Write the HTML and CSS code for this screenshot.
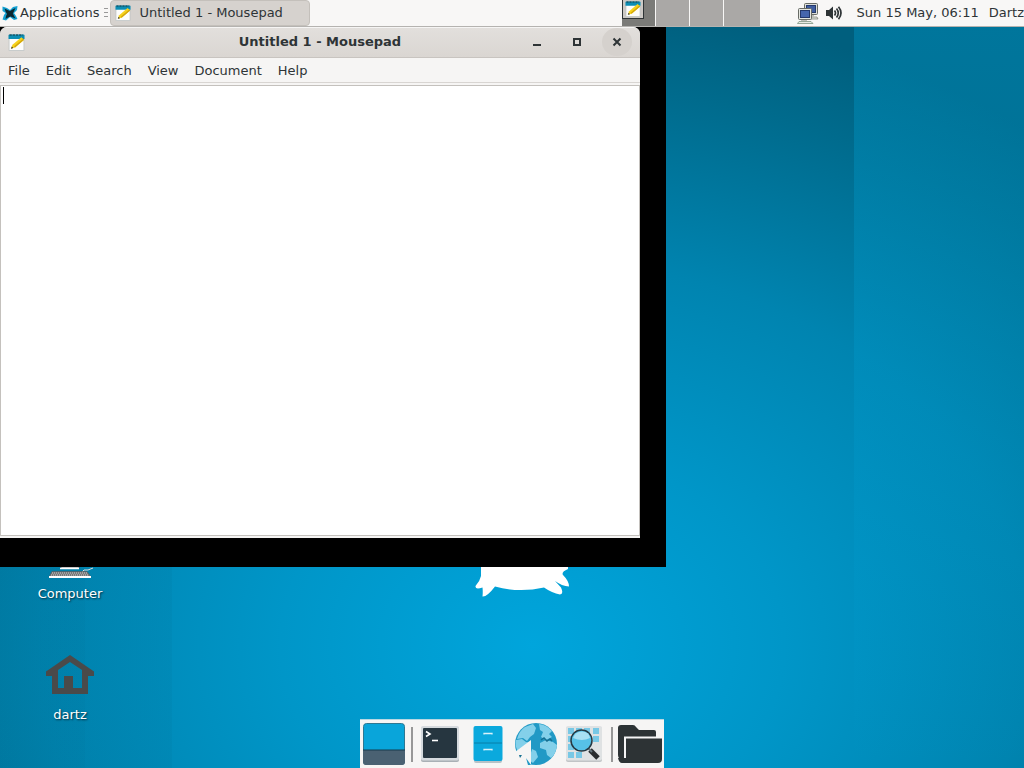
FILE: index.html
```html
<!DOCTYPE html>
<html lang="en">
<head>
<meta charset="utf-8">
<title>Desktop</title>
<link rel="stylesheet" href="styles.css">
</head>
<body class="desktop">
<svg class="defs" aria-hidden="true">
  <symbol id="notepad" viewBox="0 0 16 16">
    <rect x="1" y="1" width="14" height="14.500" fill="#fdfdfb" stroke="#b5bcbe" stroke-width=".6"/>
    <path d="M.5 4.800V1.500Q.5.500 1.500.5H14.500Q15.500.5 15.500 1.500V4.800Z" fill="#0b8db3"/>
    <path d="M1.500 1H14" stroke="#163640" stroke-width="1" stroke-dasharray="2 1"/>
    <path d="M2.800 13.800L4.200 10.200 12.600 3 15.200 5.400 6.600 12.800Z" fill="#f6d21c"/>
    <path d="M5.600 11.800L14.200 4.400 15.200 5.400 6.600 12.800Z" fill="#d3a70d"/>
    <path d="M2.800 13.800L3.600 11.800 5 13.200Z" fill="#333"/>
  </symbol>
</svg>

<header class="panel">
  <button class="apps" type="button">
    <svg class="apps-icon" viewBox="0 0 16 16" aria-hidden="true">
      <path d="M.5 1.500L5 3 8 5 11 2 15.500 1 15 5 12 8 14 11 15.500 14 12 15 8 12 4 15.500.5 14.500 2 10 3.500 8 .5 6Z" fill="#12a0d2"/>
      <path d="M2.500 3.500Q6 5 8 6 11 4 13.500 3 12 6.500 10.800 8.500L13.500 13.500 8.500 11.500Q6 12 3.500 14 3.500 11 5 9 3.500 7 2.500 3.500Z" fill="#0b2731"/>
    </svg>
    <span>Applications</span>
  </button>
  <svg class="handle" viewBox="0 0 4 10" aria-hidden="true"><path d="M0 .5H4M0 4.500H4M0 8.500H4" stroke="#999"/></svg>
  <button class="task" type="button">
    <svg class="icon16" aria-hidden="true"><use href="#notepad"/></svg>
    <span>Untitled 1 - Mousepad</span>
  </button>
  <nav class="pager" aria-label="Workspaces">
    <button class="workspace current" type="button" aria-label="Workspace 1">
      <span class="mini"><svg viewBox="0 0 16 16" aria-hidden="true"><use href="#notepad"/></svg></span>
    </button>
    <button class="workspace" type="button" aria-label="Workspace 2"></button>
    <button class="workspace" type="button" aria-label="Workspace 3"></button>
    <button class="workspace" type="button" aria-label="Workspace 4"></button>
  </nav>
  <div class="tray">
    <button class="tray-button" type="button" aria-label="Network">
      <svg width="22" height="22" viewBox="0 0 22 22">
        <path d="M10 15H20L21 17H10Z" fill="#dfe2dc" stroke="#77796f" stroke-width=".7"/>
        <rect x="7.500" y="1.500" width="13" height="11" rx="1" fill="#dddfd9" stroke="#686b66"/>
        <rect x="9.500" y="3.500" width="9" height="7" fill="#3f5da0" stroke="#25396b"/>
        <path d="M12 13H17V15H12Z" fill="#bcbeb8"/>
        <path d="M4 17H10V19H4Z" fill="#bcbeb8"/>
        <rect x="1.500" y="6.500" width="13" height="11" rx="1" fill="#e4e6e0" stroke="#686b66"/>
        <rect x="3.500" y="8.500" width="9" height="7" fill="#4666ad" stroke="#25396b"/>
        <path d="M2 19.500H14L16 21.500H.5Z" fill="#e8eae5" stroke="#7d9482" stroke-width=".8"/>
      </svg>
    </button>
    <button class="tray-button" type="button" aria-label="Volume">
      <svg width="16" height="14" viewBox="0 0 16 14">
        <path d="M0 4H3L7 .5V13.500L3 10H0Z" fill="#2e3436"/>
        <path d="M8.500 4.500Q10.500 7 8.500 9.500M10.500 2.500Q14 7 10.500 11.500M12.500 .8Q17.500 7 12.500 13.200" fill="none" stroke="#2e3436" stroke-width="1.700"/>
      </svg>
    </button>
  </div>
  <button class="clock" type="button">Sun 15 May, 06:11</button>
  <button class="user" type="button">Dartz</button>
</header>

<main class="canvas">
  <svg class="mascot" viewBox="0 0 110 60" aria-hidden="true">
    <path d="M15 10V40Q14 45 9.500 50 9 54 16.500 51.500Q17 56 16.500 60.500 21 61 29 50.500 53 57 78 51.500 86 57 94 58.500 98 58 95 51.500L89 45Q96 50 103 50.500 103 45 97 39 95 36 102 33V10Z" fill="#fff"/>
  </svg>

  <a class="shortcut computer" href="#computer">
    <svg width="48" height="48" viewBox="0 0 48 48" aria-hidden="true">
      <rect x="7" y="3" width="34" height="28" rx="2" fill="#ddd" stroke="#555"/>
      <rect x="11" y="7" width="26" height="19" fill="#4666ad"/>
      <path d="M15 31H33V38H15Z" fill="#eee" stroke="#555" stroke-width=".7"/>
      <path d="M14 38.500H33" stroke="#fff" stroke-width="1.500"/>
      <path d="M36 42Q37 39 42 40L47 38" fill="none" stroke="#dedede"/>
      <path d="M6 41.500H41L45 47H3Z" fill="#777" stroke="#555" stroke-width=".5"/>
      <path d="M6 43H41M5 45H43" stroke="#ccc" stroke-dasharray="1 1"/>
      <path d="M3 47H45" stroke="#fff" stroke-width="1.800"/>
    </svg>
    <span>Computer</span>
  </a>
  <a class="shortcut home" href="#home">
    <svg width="48" height="48" viewBox="0 0 48 48" aria-hidden="true">
      <path fill="#4a4a4a" fill-rule="evenodd" d="M24 4L48 20.500V25H42V43H6V25H0V20.500ZM24 11L12 19V37H18V25H27V37H36V19Z"/>
    </svg>
    <span>dartz</span>
  </a>

  <div class="shadow">
    <section class="window" aria-label="Untitled 1 - Mousepad">
      <div class="titlebar">
        <svg class="title-icon" aria-hidden="true"><use href="#notepad"/></svg>
        <h1 class="title">Untitled 1 - Mousepad</h1>
        <div class="controls">
          <button type="button" aria-label="Minimize"><svg viewBox="0 0 10 10"><path d="M1 8H9" stroke="#2e3436" stroke-width="2"/></svg></button>
          <button type="button" aria-label="Maximize"><svg viewBox="0 0 10 10"><rect x="2" y="2" width="6" height="6" fill="none" stroke="#2e3436" stroke-width="2"/></svg></button>
          <button class="close" type="button" aria-label="Close"><svg viewBox="0 0 10 10"><path d="M1.500 1.500L8.500 8.500M8.500 1.500L1.500 8.500" stroke="#2e3436" stroke-width="2"/></svg></button>
        </div>
      </div>
      <nav class="menubar" aria-label="Menu">
        <button type="button">File</button>
        <button type="button">Edit</button>
        <button type="button">Search</button>
        <button type="button">View</button>
        <button type="button">Document</button>
        <button type="button">Help</button>
      </nav>
      <textarea class="editor" aria-label="Document text"></textarea>
    </section>
  </div>
</main>

<footer class="dock">
  <button type="button" aria-label="Show desktop">
    <svg viewBox="0 0 48 48">
      <rect x="3.500" y="3.500" width="41" height="41" rx="3" fill="#09a5da" stroke="#2d7893"/>
      <path d="M3 30H45V42Q45 45 42 45H6Q3 45 3 42Z" fill="#4a6172"/>
      <path d="M3 30H45" stroke="#163b4c"/>
    </svg>
  </button>
  <span class="divider"></span>
  <button type="button" aria-label="Terminal">
    <svg viewBox="0 0 48 48">
      <rect x="5" y="7" width="38" height="35" rx="2" fill="#a9b0b5"/>
      <rect x="5" y="6" width="38" height="34.500" rx="2" fill="#d5dade"/>
      <rect x="7" y="8" width="34" height="30" rx="1" fill="#263640"/>
      <path d="M10 11.500L14 14 10 16.500" fill="none" stroke="#fff" stroke-width="1.600"/>
      <path d="M16 20.500H22" stroke="#fff" stroke-width="1.600"/>
    </svg>
  </button>
  <button type="button" aria-label="File manager">
    <svg viewBox="0 0 48 48">
      <rect x="10" y="8" width="28" height="35" rx="2" fill="#b8c2c7"/>
      <rect x="9.500" y="6" width="29" height="35" rx="2" fill="#0ba9dd"/>
      <path d="M10 23H38" stroke="#087fa8"/>
      <path d="M20 14.500V13.500H28V14.500M20 30.500V29.500H28V30.500" fill="none" stroke="#d9f2fa" stroke-width="1.300"/>
    </svg>
  </button>
  <button type="button" aria-label="Web browser">
    <svg viewBox="0 0 48 48">
      <circle cx="24" cy="24" r="21" fill="#2199c5"/>
      <path d="M13 7L21 4 24 8 22 14 18 17 15 21 11 18 5 19Q7 11 13 7ZM27 4Q35 5 40 11L37 14 40 17 34 20 29 17 31 12 28 10ZM28 23L34 20 41 22 45 25Q44 34 39 38L35 35 34 30 28 28ZM10 19L14 22 19 23 17 29 7 33Q2 26 4 20ZM20 29L24 31 26 37 21 43 17 40Z" fill="#83d0ea"/>
      <path d="M29 20L32 18 35 21 38 19 40 21" fill="none" stroke="#176f91" stroke-width="1.500"/>
      <path d="M19 20V45H8L6 36 3 32Z" fill="#f6f5f4"/>
      <path d="M7 35L10 35 8 38Z" fill="#176f91"/>
      <path d="M14 38L19 45H16Z" fill="#2199c5"/>
    </svg>
  </button>
  <button type="button" aria-label="Application finder">
    <svg viewBox="0 0 48 48">
      <rect x="6" y="7" width="36" height="35" rx="2" fill="#c1c4c6"/>
      <rect x="6" y="6" width="36" height="34.500" rx="2" fill="#dfe2e3"/>
      <path d="M8 8h6v6h-6zM16 8h6v6h-6zM24 8h6v6h-6zM33 8h6v6h-6zM8 16h6v6h-6zM33 16h6v6h-6zM8 24h6v6h-6zM8 32h6v6h-6zM16 32h6v6h-6z" fill="#78c8e5"/>
      <path d="M30 30L38 38" stroke="#292c2e" stroke-width="5"/>
      <path d="M28 28L32 32" stroke="#65747c" stroke-width="2"/>
      <circle cx="21.500" cy="20.500" r="10.500" fill="#57c1e7" stroke="#263943" stroke-width="1.500"/>
      <path d="M13 18Q15 11.500 22 11.500T30 18Q22 22 13 18Z" fill="#a8e0f3"/>
    </svg>
  </button>
  <span class="divider"></span>
  <button type="button" aria-label="Home folder">
    <svg viewBox="0 0 48 48">
      <path d="M5 5H17Q19 5 20 7L23 10H38Q40 10 40 12V18H10V40H8Q2 40 2 35V8Q2 5 5 5Z" fill="#2d3335"/>
      <path d="M8 18H46V39Q46 43 42 43H6Q3 43 2 38H8Z" fill="#2d3335"/>
      <path d="M9 38V17.500H46" fill="none" stroke="#f5f5f5" stroke-width="2"/>
    </svg>
  </button>
</footer>
</body>
</html>
```

FILE: styles.css
```css
* {
  box-sizing: border-box;
}

.desktop {
  margin: 0;
  height: 100vh;
  overflow: hidden;
  display: flex;
  flex-direction: column;
  font: 13px/16px "DejaVu Sans", sans-serif;
  color: #2e3436;
  background: radial-gradient(ellipse 900px 700px at 52% 84%, #00a5dc 0%, #0096c8 28%, #0084b0 55%, #006b8d 80%, #005f7e 92%);
}

.defs {
  position: absolute;
  width: 0;
  height: 0;
}

button {
  margin: 0;
  padding: 0;
  border: 0;
  background: none;
  font: inherit;
  color: inherit;
  white-space: nowrap;
}

svg {
  display: block;
  flex: none;
}

.panel {
  display: flex;
  align-items: center;
  height: 27px;
  flex: none;
  background: #f8f7f6;
  border-bottom: 1px solid #b5b3b0;
  position: relative;
}

.apps {
  display: flex;
  align-items: center;
  gap: 2px;
  padding-left: 2px;
}

.apps-icon,
.icon16 {
  width: 16px;
  height: 16px;
}

.handle {
  width: 4px;
  height: 10px;
  margin: 0 2px 0 5px;
}

.task {
  display: flex;
  align-items: center;
  align-self: stretch;
  gap: 8px;
  width: 200px;
  padding-left: 4px;
  border: 1px solid #c4c0bb;
  border-radius: 4px;
  background: #d6d2ce;
}

.pager {
  display: flex;
  align-self: stretch;
  gap: 1px;
  margin-left: auto;
}

.workspace {
  width: 33px;
  background: #aaa8a6;
}

.workspace:last-child {
  width: 36px;
}

.workspace.current {
  display: flex;
  align-items: flex-start;
  background: #7b7b78;
}

.mini {
  display: flex;
  justify-content: center;
  width: 22px;
  height: 19px;
  padding-top: 1px;
  border: 1px solid #2e3436;
  border-top: 0;
  background: #ccc9c5;
}

.mini svg {
  width: 16px;
  height: 16px;
}

.tray {
  display: flex;
  align-items: center;
  gap: 7px;
  margin: 0 15px 0 37px;
}

.clock {
  margin-right: 10px;
}

.canvas {
  flex: 1;
  position: relative;
  min-height: 0;
  background:
    linear-gradient(#00b0e848, #00b0e830 40%, #00b0e800) right / 170px 100% no-repeat,
    linear-gradient(#00506810, #00506810) left / 172px 100% no-repeat,
    linear-gradient(#0050680a, #0050680a) left / 85px 100% no-repeat;
}

.shadow {
  position: absolute;
  top: 0;
  left: 0;
  width: 666px;
  height: 540px;
  padding: 0 26px 29px 0;
  background: #000;
}

.window {
  display: flex;
  flex-direction: column;
  height: 100%;
  border-radius: 7px 7px 0 0;
  overflow: hidden;
  background: #f6f5f4;
}

.titlebar {
  display: grid;
  grid-template-columns: 1fr auto 1fr;
  align-items: center;
  height: 31px;
  padding: 0 8px 1px;
  border-top: 1px solid #f6f5f4;
  border-bottom: 1px solid #c8c4c0;
  background: linear-gradient(#e2dfdc, #dad6d2);
}

.title-icon {
  width: 17px;
  height: 17px;
}

.title {
  margin: 0;
  font-size: 13px;
  line-height: 16px;
}

.controls {
  display: flex;
  justify-content: flex-end;
  gap: 10px;
}

.controls button {
  display: grid;
  place-items: center;
  width: 30px;
  height: 28px;
  border-radius: 50%;
}

.controls svg {
  width: 10px;
  height: 10px;
}

.controls .close {
  background: #d5d1cd;
}

.menubar {
  display: flex;
  height: 25px;
  padding-top: 1px;
  border-bottom: 1px solid #d8d5d2;
}

.menubar button {
  padding: 0 8px;
}

.editor {
  flex: 1;
  margin: 2px 0;
  padding: 2px;
  border: 1px solid #c4c1bd;
  outline: 0;
  resize: none;
  font: inherit;
  background: linear-gradient(#000, #000) 2px 1px / 1px 17px no-repeat #fff;
}

.shortcut {
  position: absolute;
  left: 0;
  width: 140px;
  display: flex;
  flex-direction: column;
  align-items: center;
  gap: 8px;
  color: #fff;
  text-decoration: none;
  text-shadow: 1px 1px 2px #000a;
}

.computer {
  top: 503px;
}

.home {
  top: 624px;
}

.mascot {
  position: absolute;
  top: 509px;
  left: 466px;
  width: 110px;
  height: 60px;
  overflow: visible;
}

.dock {
  position: absolute;
  bottom: 0;
  left: 50%;
  transform: translateX(-50%);
  display: flex;
  height: 49px;
  border-top: 1px solid #b9d8e3;
  background: #f6f5f4;
}

.dock button,
.dock svg {
  width: 48px;
  height: 48px;
}

.divider {
  width: 2px;
  height: 35px;
  margin: 7px 3px;
  background: #979797;
}
```
